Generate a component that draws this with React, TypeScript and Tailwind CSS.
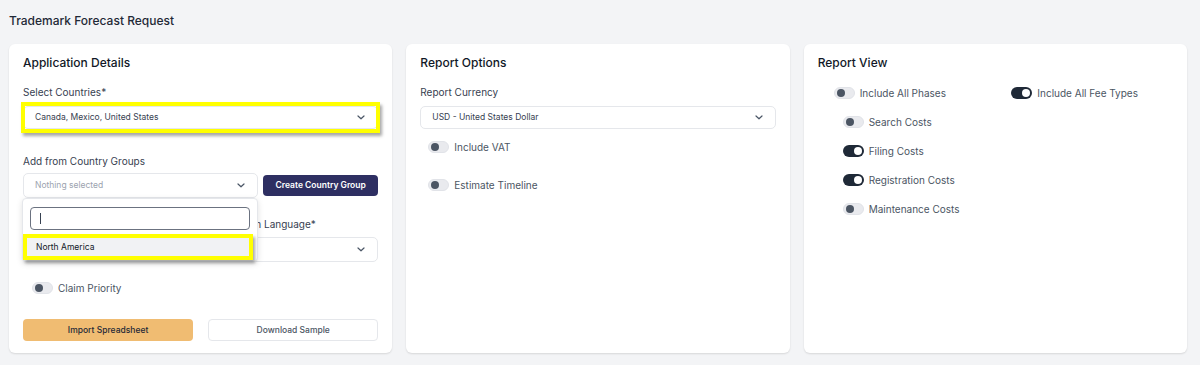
import React from 'react';

const Chevron = () => (
  <svg width="8" height="5" viewBox="0 0 8 5" fill="none" className="text-gray-600">
    <path d="M1 1l3 2.8L7 1" stroke="currentColor" strokeWidth="1.2" strokeLinecap="round" strokeLinejoin="round" />
  </svg>
);

const Toggle = ({ on = false }: { on?: boolean }) => (
  <span
    className={`relative inline-flex h-[12px] w-[21px] shrink-0 items-center rounded-full ${
      on ? 'bg-[#1f2937]' : 'bg-[#e9eaee] border border-[#e1e3e8]'
    }`}
  >
    <span
      className={`absolute h-[8px] w-[8px] rounded-full ${
        on ? 'right-[2px] bg-white' : 'left-[2px] bg-[#4b5563]'
      }`}
    />
  </span>
);

const ToggleRow = ({ label, on = false, className = '' }: { label: string; on?: boolean; className?: string }) => (
  <div className={`flex h-[14px] items-center gap-[5px] ${className}`}>
    <Toggle on={on} />
    <span className="text-[10px] leading-[14px] text-[#4b5563]">{label}</span>
  </div>
);

const SelectBox = ({ text, placeholder = false, h = 'h-[25px]' }: { text: string; placeholder?: boolean; h?: string }) => (
  <div className={`flex ${h} w-full items-center justify-between rounded-[5px] border border-[#e5e7eb] bg-white pl-[11px] pr-[12px]`}>
    <span className={`text-[8.5px] ${placeholder ? 'text-[#9ca3af]' : 'text-[#374151]'}`}>{text}</span>
    <Chevron />
  </div>
);

const Label = ({ children }: { children: React.ReactNode }) => (
  <div className="text-[10px] leading-[14px] text-[#374151]">{children}</div>
);

const Card = ({ title, children }: { title: string; children: React.ReactNode }) => (
  <div className="flex flex-col rounded-[6px] bg-white px-[14px] pb-[12px] pt-[11px] shadow-[0_1px_2px_rgba(0,0,0,0.12)]">
    <h2 className="text-[12px] font-medium leading-[16px] text-[#111827]">{title}</h2>
    {children}
  </div>
);

export default function App() {
  return (
    <div className="min-h-[365px] bg-[#f3f4f6] pl-[9px] pr-[13px] pt-[13px] font-['Inter',sans-serif]">
      <h1 className="mb-[15px] text-[12px] font-medium leading-[16px] text-[#1f2937]">Trademark Forecast Request</h1>

      <div className="grid grid-cols-3 gap-[14px]">
        <Card title="Application Details">
          <div className="mt-[14px]">
            <Label>Select Countries*</Label>
          </div>
          <div className="relative mt-[7px]">
            <SelectBox text="Canada, Mexico, United States" h="h-[23px]" />
            <div className="pointer-events-none absolute -inset-x-[2px] -inset-y-[4px] border-4 border-[#ffff00] shadow-[2px_3px_3px_rgba(0,0,0,0.35)]" />
          </div>

          <div className="mt-[25px]">
            <Label>Add from Country Groups</Label>
          </div>
          <div className="relative z-10 mt-[5px] flex items-center gap-[5px]">
            <div className="relative w-[235px]">
              <SelectBox text="Nothing selected" placeholder />
              <div className="absolute left-[-1px] top-[25px] h-[64px] w-[236px] rounded-[4px] border border-[#e5e7eb] bg-white px-[7px] pt-[8px] shadow-[0_2px_6px_rgba(0,0,0,0.12)]">
                <div className="flex h-[23px] items-center rounded-[4px] border border-[#6b7280] px-[9px]">
                  <span className="h-[11px] w-[1px] bg-[#374151]" />
                </div>
                <div className="relative -mx-[7px] mt-[4px] h-[26px]">
                  <div className="absolute inset-x-[4px] top-[4px] bottom-[4px] flex items-center bg-[#f1f2f4] pl-[9px] text-[8.5px] text-[#111827]">
                    North America
                  </div>
                  <div className="pointer-events-none absolute inset-y-0 left-0 right-[4px] border-4 border-[#ffff00] shadow-[2px_3px_3px_rgba(0,0,0,0.35)]" />
                </div>
              </div>
            </div>
            <button className="h-[21px] flex-1 rounded-[4px] bg-[#2e2f62] text-[8.5px] font-semibold text-white">
              Create Country Group
            </button>
          </div>

          <div className="mt-[19px] grid grid-cols-2 gap-[15px]">
            <div className="col-start-2">
              <Label>Application Language*</Label>
              <div className="mt-[6px]">
                <SelectBox text="" />
              </div>
            </div>
          </div>

          <ToggleRow label="Claim Priority" className="ml-[9px] mt-[19px]" />

          <div className="mt-[24px] grid grid-cols-2 gap-[15px]">
            <button className="h-[22px] rounded-[4px] bg-[#f0bc72] text-[8.5px] font-medium text-[#1f2937]">
              Import Spreadsheet
            </button>
            <button className="h-[22px] rounded-[4px] border border-[#e5e7eb] bg-white text-[8.5px] font-medium text-[#4b5563]">
              Download Sample
            </button>
          </div>
        </Card>

        <Card title="Report Options">
          <div className="mt-[14px]">
            <Label>Report Currency</Label>
          </div>
          <div className="mt-[7px]">
            <SelectBox text="USD - United States Dollar" h="h-[23px]" />
          </div>
          <ToggleRow label="Include VAT" className="ml-[8px] mt-[11px]" />
          <ToggleRow label="Estimate Timeline" className="ml-[8px] mt-[24px]" />
        </Card>

        <Card title="Report View">
          <div className="mt-[15px] grid grid-cols-2">
            <div className="flex flex-col gap-[15px] pl-[16px]">
              <ToggleRow label="Include All Phases" />
              <div className="flex flex-col gap-[15px] pl-[9px]">
                <ToggleRow label="Search Costs" />
                <ToggleRow label="Filing Costs" on />
                <ToggleRow label="Registration Costs" on />
                <ToggleRow label="Maintenance Costs" />
              </div>
            </div>
            <div className="pl-[16px]">
              <ToggleRow label="Include All Fee Types" on />
            </div>
          </div>
        </Card>
      </div>
    </div>
  );
}
